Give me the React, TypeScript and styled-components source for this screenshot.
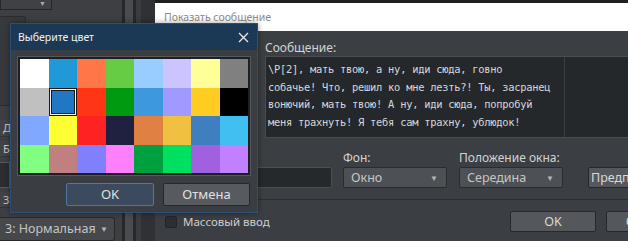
import React from "react";
import styled, { createGlobalStyle } from "styled-components";

const GlobalStyle = createGlobalStyle`
  html, body { margin: 0; padding: 0; background: #2e3034; }
  * { box-sizing: border-box; }
  body { font-family: "Noto Sans", "Open Sans", sans-serif; }
`;

const Desktop = styled.div`
  position: relative;
  width: 628px;
  height: 241px;
  overflow: hidden;
  background: #2e3033;
`;

/* ---------- background editor (mostly hidden) ---------- */
const BackApp = styled.div`
  display: flex;
  height: 100%;
`;

const LeftPane = styled.div`
  width: 122px;
  flex-shrink: 0;
  display: flex;
  flex-direction: column;
  background: #3d3f42;
`;

const TopSelect = styled.div`
  width: 52px;
  height: 10px;
  border: 1px solid #242628;
  border-top: none;
  background: #3f4144;
  display: flex;
  align-items: center;
  justify-content: flex-end;
  padding: 0 5px 0 0;
  color: #a8a8a8;
  font-size: 7px;
  line-height: 8px;
`;

const Group = styled.div`
  margin-top: 6px;
  width: 26px;
  height: 92px;
  border: 1px solid #2a2c2f;
  border-left: none;
  border-radius: 0 3px 3px 0;
  background: #37393c;
`;

const SideRow = styled.div<{ $top: number }>`
  margin-top: ${(p) => p.$top}px;
  height: 17px;
  padding-left: 3px;
  display: flex;
  align-items: center;
  color: #c8c8c8;
  font-size: 11px;
  background: #414346;
  border-bottom: 1px solid #333538;
`;

const SideBox = styled.div`
  margin-top: 5px;
  width: 10px;
  height: 26px;
  border: 1px solid #55585b;
  border-left: none;
  background: #2b2d30;
`;

const BottomSelect = styled.div`
  margin-top: 9px;
  width: 115px;
  height: 24px;
  border: 1px solid #26282a;
  border-left: none;
  border-radius: 0 3px 3px 0;
  background: #46484b;
  display: flex;
  align-items: center;
  justify-content: space-between;
  padding: 0 6px 2px 5px;
  color: #c4c4c4;
  font-size: 12.5px;
`;

const Arrow = styled.span`
  font-size: 8px;
  color: #b4b4b4;
`;

const Splitter = styled.div`
  width: 14px;
  flex-shrink: 0;
  background: #494b4e;
  border-left: 3px solid #26282a;
  border-right: 3px solid #26282a;
`;

const RightStrip = styled.div`
  flex: 1;
  background: #2f3134;
  border-left: 5px solid #3a3c3f;
`;

/* ---------- message window ---------- */
const MsgWindow = styled.div`
  position: absolute;
  left: 155px;
  top: 0;
  width: 560px;
  height: 250px;
  border-top: 3px solid #1e2022;
  display: flex;
  flex-direction: column;
`;

const WhiteTitle = styled.div`
  height: 28px;
  background: #ffffff;
  color: #8a8a8a;
  font-size: 10.5px;
  padding: 7px 0 0 9px;
`;

const MsgBody = styled.div`
  flex: 1;
  background: #3b3e42;
  display: flex;
  flex-direction: column;
  padding: 9px 0 0 5px;
`;

const MessageSection = styled.div`
  padding-left: 105px;
  display: flex;
  flex-direction: column;
`;

const Label = styled.div`
  height: 16px;
  line-height: 16px;
  color: #d4d4d4;
  font-size: 12px;
  white-space: nowrap;
`;

const TextBox = styled.div`
  height: 82px;
  display: flex;
  background: #25282b;
  border: 1px solid #494c50;
`;

const TextArea = styled.div`
  width: 299px;
  flex-shrink: 0;
  border-right: 1px solid #3c3f43;
  padding: 4px 0 0 2px;
  font-family: "DejaVu Sans Mono", "Liberation Mono", monospace;
  font-size: 10.4px;
  letter-spacing: -0.25px;
  line-height: 17.5px;
  color: #d8d8d8;
  white-space: pre;
  overflow: hidden;
`;

const FieldRow = styled.div`
  margin-top: 12px;
  display: flex;
  align-items: flex-end;
`;

const FieldCol = styled.div<{ $w: number; $ml: number }>`
  width: ${(p) => p.$w}px;
  margin-left: ${(p) => p.$ml}px;
  flex-shrink: 0;
  display: flex;
  flex-direction: column;
  gap: 1px;
`;

const DarkInput = styled.div`
  height: 21px;
  background: #26292c;
  border: 1px solid #4b4e52;
  border-radius: 2px;
`;

const Select = styled.div`
  height: 21px;
  background: #4d5054;
  border: 1px solid #2a2c2f;
  border-radius: 2px;
  display: flex;
  align-items: center;
  justify-content: space-between;
  padding: 0 8px 1px 7px;
  color: #c6c6c6;
  font-size: 12.5px;
`;

const Button = styled.div<{ $w: number; $ml?: number }>`
  width: ${(p) => p.$w}px;
  margin-left: ${(p) => p.$ml ?? 0}px;
  flex-shrink: 0;
  height: 21px;
  background: #54575b;
  border: 1px solid #26282a;
  border-radius: 2px;
  display: flex;
  align-items: center;
  justify-content: center;
  color: #dadada;
  font-size: 12.5px;
  padding-bottom: 1px;
  white-space: nowrap;
`;

const LeftButton = styled(Button)`
  justify-content: flex-start;
  padding-left: 2px;
  overflow: hidden;
`;

const Separator = styled.div`
  margin-top: 11px;
  height: 1px;
  background: #2c2e31;
  margin-left: -5px;
`;

const BottomRow = styled.div`
  margin-top: 11px;
  display: flex;
  align-items: center;
`;

const Check = styled.div`
  margin-left: 5px;
  width: 12px;
  height: 12px;
  flex-shrink: 0;
  background: #2c2e31;
  border: 1px solid #232527;
  border-radius: 2px;
`;

const CheckLabel = styled.span`
  margin-left: 6px;
  color: #cfcfcf;
  font-size: 11.5px;
  width: 327px;
  flex-shrink: 0;
`;

/* ---------- color dialog ---------- */
const ColorDialog = styled.div`
  position: absolute;
  left: 10px;
  top: 23px;
  width: 248px;
  height: 190px;
  border: 1px solid #2b5074;
  background: #3a3d41;
  display: flex;
  flex-direction: column;
  box-shadow: 0 0 6px rgba(0, 0, 0, 0.4);
`;

const DlgTitle = styled.div`
  height: 26px;
  background: #1b3954;
  display: flex;
  align-items: center;
  justify-content: space-between;
  padding: 0 8px 0 7px;
  color: #f2f2f2;
  font-size: 10.5px;
`;

const DlgBody = styled.div`
  flex: 1;
  display: flex;
  flex-direction: column;
  padding: 6px 5px 0 6px;
`;

const Palette = styled.div`
  width: 234px;
  border: 1px solid #55585c;
  background: #1d1f22;
  padding: 2px;
  display: grid;
  grid-template-columns: repeat(8, 28.5px);
  grid-auto-rows: 28.5px;
`;

const Cell = styled.div<{ $c: string; $sel?: boolean }>`
  background: ${(p) => p.$c};
  box-shadow: ${(p) =>
    p.$sel
      ? "inset 0 0 0 1px #1a1a1a, inset 0 0 0 2px #f4f4f4, inset 0 0 0 3px #1a1a1a"
      : "none"};
`;

const DlgButtons = styled.div`
  margin-top: 7px;
  display: flex;
  justify-content: flex-end;
  gap: 9px;
  padding-right: 2px;
`;

const DlgButton = styled.div<{ $primary?: boolean; $w: number }>`
  width: ${(p) => p.$w}px;
  height: 23px;
  border-radius: 2px;
  border: 1px solid ${(p) => (p.$primary ? "#4f77a3" : "#26282b")};
  background: ${(p) => (p.$primary ? "#3b4a5d" : "#575a5e")};
  display: flex;
  align-items: center;
  justify-content: center;
  color: #e0e0e0;
  font-size: 13px;
  padding-bottom: 1px;
`;

const CloseIcon = () => (
  <svg width="11" height="11" viewBox="0 0 11 11">
    <path d="M1 1 L10 10 M10 1 L1 10" stroke="#e8e8e8" strokeWidth="1.3" />
  </svg>
);

const COLORS = [
  "#ffffff", "#1f9ad7", "#ff7648", "#66cc44", "#99ccff", "#ccc4ff", "#ffff99", "#808080",
  "#c0c0c0", "#2077c6", "#ff3516", "#009a10", "#3d98dc", "#a09aff", "#ffcc22", "#000000",
  "#80a8ff", "#ffff33", "#ff2222", "#202040", "#e08042", "#f0c040", "#3f7fc0", "#40c0f0",
  "#80ff80", "#c08080", "#8080ff", "#ff80ff", "#00a040", "#00e060", "#a060e0", "#c080ff",
];

const MESSAGE = [
  "\\P[2], мать твою, а ну, иди сюда, говно",
  "собачье! Что, решил ко мне лезть?! Ты, засранец",
  "вонючий, мать твою! А ну, иди сюда, попробуй",
  "меня трахнуть! Я тебя сам трахну, ублюдок!",
].join("\n");

export default function App() {
  return (
    <Desktop>
      <GlobalStyle />
      <BackApp>
        <LeftPane>
          <TopSelect>▼</TopSelect>
          <Group />
          <SideRow $top={14}>Д</SideRow>
          <SideRow $top={4}>Б</SideRow>
          <SideBox />
          <SideRow $top={4}>3</SideRow>
          <BottomSelect>
            <span>3: Нормальная</span>
            <Arrow>▼</Arrow>
          </BottomSelect>
        </LeftPane>
        <Splitter />
        <RightStrip />
      </BackApp>

      <MsgWindow>
        <WhiteTitle>Показать сообщение</WhiteTitle>
        <MsgBody>
          <MessageSection>
            <Label>Сообщение:</Label>
            <TextBox>
              <TextArea>{MESSAGE}</TextArea>
            </TextBox>
          </MessageSection>
          <FieldRow>
            <FieldCol $w={172} $ml={0}>
              <DarkInput />
            </FieldCol>
            <FieldCol $w={104} $ml={11}>
              <Label>Фон:</Label>
              <Select>
                <span>Окно</span>
                <Arrow>▼</Arrow>
              </Select>
            </FieldCol>
            <FieldCol $w={104} $ml={12}>
              <Label>Положение окна:</Label>
              <Select>
                <span>Середина</span>
                <Arrow>▼</Arrow>
              </Select>
            </FieldCol>
            <FieldCol $w={100} $ml={25}>
              <LeftButton $w={100}>Предпросмотр...</LeftButton>
            </FieldCol>
          </FieldRow>
          <Separator />
          <BottomRow>
            <Check />
            <CheckLabel>Массовый ввод</CheckLabel>
            <Button $w={86}>OK</Button>
            <Button $w={86} $ml={10}>Отмена</Button>
          </BottomRow>
        </MsgBody>
      </MsgWindow>

      <ColorDialog>
        <DlgTitle>
          <span>Выберите цвет</span>
          <CloseIcon />
        </DlgTitle>
        <DlgBody>
          <Palette>
            {COLORS.map((c, i) => (
              <Cell key={i} $c={c} $sel={i === 9} />
            ))}
          </Palette>
          <DlgButtons>
            <DlgButton $primary $w={88}>OK</DlgButton>
            <DlgButton $w={87}>Отмена</DlgButton>
          </DlgButtons>
        </DlgBody>
      </ColorDialog>
    </Desktop>
  );
}
